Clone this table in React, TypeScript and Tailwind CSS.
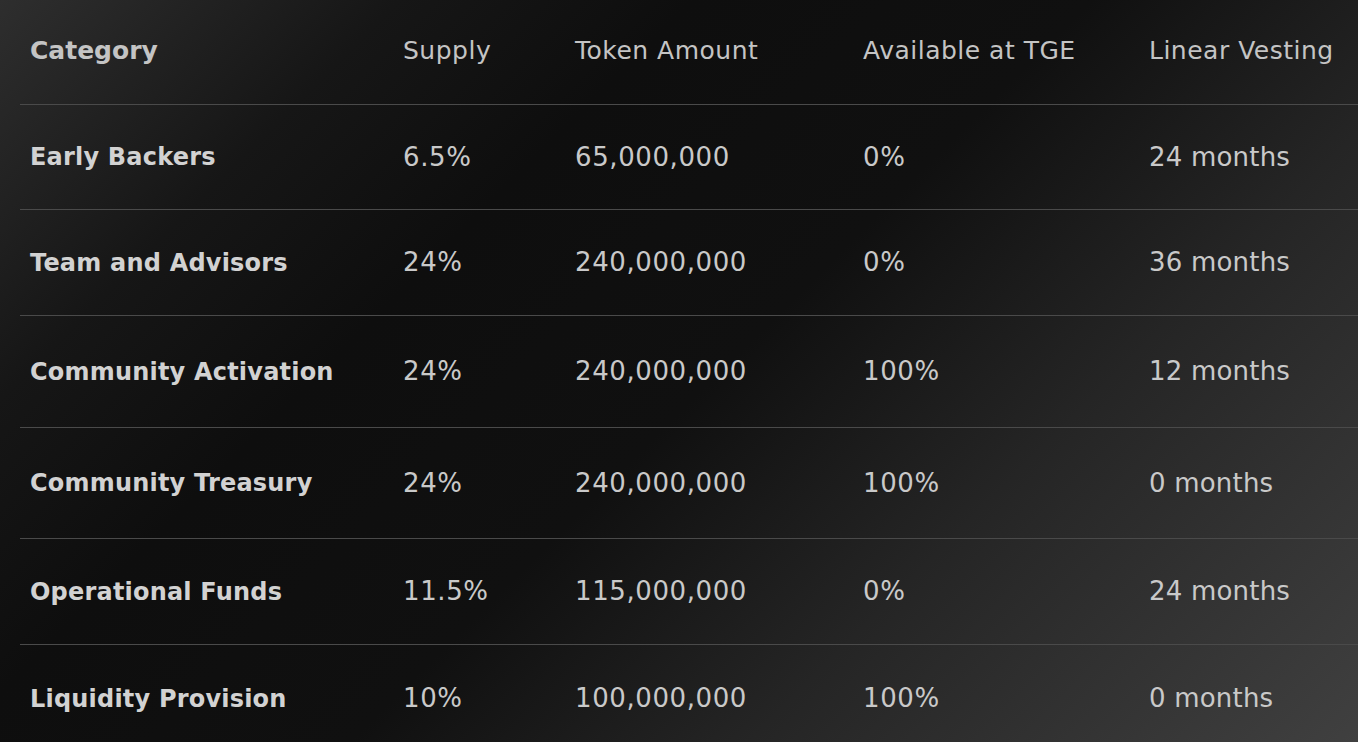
import React from 'react';

type Row = {
  category: string;
  supply: string;
  amount: string;
  tge: string;
  vesting: string;
  h: string;
};

const rows: Row[] = [
  { category: 'Early Backers', supply: '6.5%', amount: '65,000,000', tge: '0%', vesting: '24 months', h: 'h-[105px]' },
  { category: 'Team and Advisors', supply: '24%', amount: '240,000,000', tge: '0%', vesting: '36 months', h: 'h-[106px]' },
  { category: 'Community Activation', supply: '24%', amount: '240,000,000', tge: '100%', vesting: '12 months', h: 'h-[112px]' },
  { category: 'Community Treasury', supply: '24%', amount: '240,000,000', tge: '100%', vesting: '0 months', h: 'h-[111px]' },
  { category: 'Operational Funds', supply: '11.5%', amount: '115,000,000', tge: '0%', vesting: '24 months', h: 'h-[106px]' },
  { category: 'Liquidity Provision', supply: '10%', amount: '100,000,000', tge: '100%', vesting: '0 months', h: 'h-[108px]' },
];

const grid = 'grid grid-cols-[373px_172px_288px_286px_1fr] items-center pl-[10px]';

export default function App() {
  return (
    <div
      className="h-[742px] w-full overflow-hidden bg-[linear-gradient(135deg,#2e2e2e_0%,#161616_19%,#0e0e0e_33%,#101010_52%,#252525_71%,#404040_100%)] text-[#c9c9c9]"
      style={{ fontFamily: '"DejaVu Sans", "Liberation Sans", sans-serif' }}
    >
      <div className="pl-[20px]">
        {/* header */}
        <div className={`${grid} h-[104px] pb-[2px] text-[25px] tracking-[0.5px] text-[#c4c4c4]`}>
          <div className="font-bold tracking-normal">Category</div>
          <div>Supply</div>
          <div>Token Amount</div>
          <div>Available at TGE</div>
          <div>Linear Vesting</div>
        </div>

        {rows.map((r) => (
          <div key={r.category} className={`${grid} ${r.h} border-t border-[#4a4a4a]`}>
            <div className="text-[24px] tracking-[0.2px] font-bold text-[#d2d2d2]">{r.category}</div>
            <div className="text-[26px] tracking-[0.6px]">{r.supply}</div>
            <div className="text-[26px] tracking-[0.6px]">{r.amount}</div>
            <div className="text-[26px] tracking-[0.6px]">{r.tge}</div>
            <div className="text-[26px] tracking-[0.2px]">{r.vesting}</div>
          </div>
        ))}
      </div>
    </div>
  );
}
